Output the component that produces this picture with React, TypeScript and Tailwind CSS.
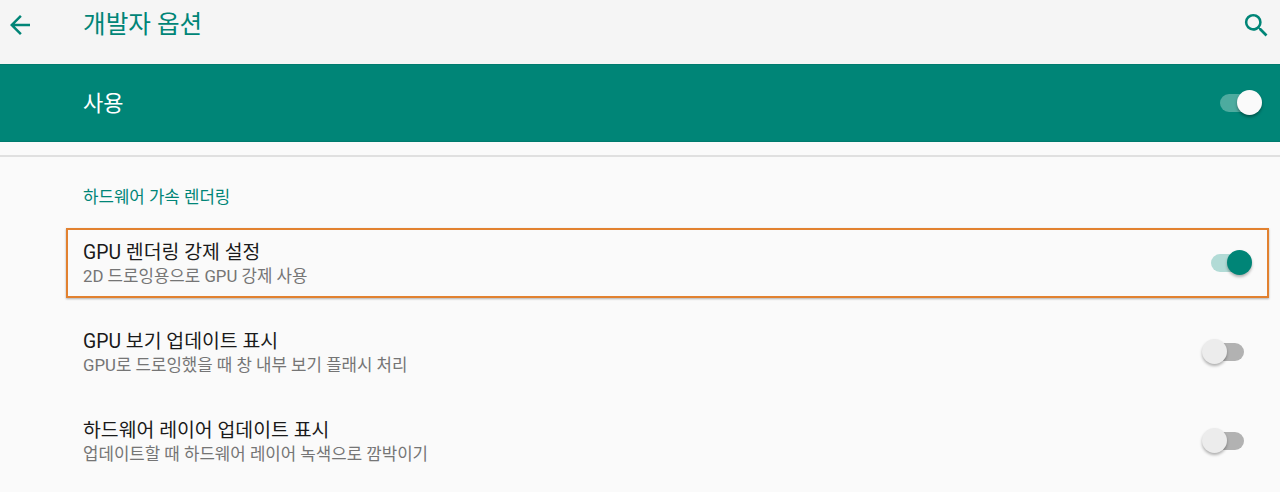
import React from "react";

const font = { fontFamily: '"Roboto","Noto Sans CJK KR",sans-serif' };

function Toggle({ on }: { on: boolean }) {
  return (
    <div className="relative h-[18px] w-[42px] shrink-0">
      <div className={on ? "absolute left-0 top-0 h-[18px] w-[34px] rounded-full bg-[#b2dbd6]" : "absolute left-[8px] top-0 h-[18px] w-[34px] rounded-full bg-[#b2b2b2]"} />
      <div className={on ? "absolute left-[16px] top-[-4px] h-[25px] w-[25px] rounded-full bg-[#008577] shadow-[0_2px_3px_rgba(0,0,0,0.3)]" : "absolute left-0 top-[-4px] h-[25px] w-[25px] rounded-full bg-[#ececec] shadow-[0_2px_3px_rgba(0,0,0,0.3)]"} />
    </div>
  );
}

function Row({ title, sub, on }: { title: string; sub: string; on: boolean }) {
  return (
    <div className={on ? "flex h-[89px] items-center justify-between pl-[83px] pr-[27px]" : "flex h-[89px] items-center justify-between pl-[83px] pr-[36px]"}>
      <div className="flex flex-col pt-[2px]">
        <div className="text-[19.4px] leading-[26px] text-[#1a1a1a]">{title}</div>
        <div className="text-[16.8px] leading-[21px] text-[#757575]">{sub}</div>
      </div>
      <Toggle on={on} />
    </div>
  );
}

export default function App() {
  return (
    <div className="flex h-[492px] w-[1280px] flex-col overflow-hidden bg-[#fafafa]" style={font}>
      <header className="flex h-[64px] items-center justify-between bg-[#f5f5f5] pl-[5px] pr-[8px]">
        <div className="flex items-center">
          <svg width="30" height="30" viewBox="0 0 24 24" className="mt-[-14px] text-[#008577]" fill="currentColor">
            <path d="M20 11H7.83l5.59-5.59L12 4l-8 8 8 8 1.41-1.41L7.83 13H20v-2z" />
          </svg>
          <h1 className="ml-[48px] mt-[-14px] text-[24.6px] leading-[30px] text-[#008577]">개발자 옵션</h1>
        </div>
        <svg width="31" height="31" viewBox="0 0 24 24" className="mt-[-14px] text-[#008577]" fill="currentColor">
          <path d="M15.5 14h-.79l-.28-.27A6.47 6.47 0 0 0 16 9.5 6.5 6.5 0 1 0 9.5 16c1.61 0 3.09-.59 4.23-1.57l.27.28v.79l5 4.99L20.49 19l-4.99-5zm-6 0C7.01 14 5 11.99 5 9.5S7.01 5 9.5 5 14 7.01 14 9.5 11.99 14 9.5 14z" />
        </svg>
      </header>

      <section className="flex h-[78px] items-center justify-between border-y border-[#007b6e] bg-[#008577] pl-[83px] pr-[18px]">
        <span className="text-[22px] text-white">사용</span>
        <div className="relative h-[18px] w-[42px]">
          <div className="absolute left-0 top-0 h-[18px] w-[34px] rounded-full bg-[#4dab9f]" />
          <div className="absolute left-[17px] top-[-4px] h-[25px] w-[25px] rounded-full bg-[#fafafa] shadow-[0_2px_3px_rgba(0,0,0,0.35)]" />
        </div>
      </section>

      <div className="mt-[13px] h-[2px] bg-[#e0e0e0]" />

      <div className="h-[61px] pl-[83px] pt-[29px] text-[16.8px] leading-[22px] text-[#008577]">하드웨어 가속 렌더링</div>

      <div className="relative">
        <div className="pointer-events-none absolute left-[66px] top-[10px] h-[70px] w-[1203px] border-2 border-[#e2812f] shadow-[0_1px_2px_rgba(0,0,0,0.3)]" />
        <Row title="GPU 렌더링 강제 설정" sub="2D 드로잉용으로 GPU 강제 사용" on />
      </div>
      <Row title="GPU 보기 업데이트 표시" sub="GPU로 드로잉했을 때 창 내부 보기 플래시 처리" on={false} />
      <Row title="하드웨어 레이어 업데이트 표시" sub="업데이트할 때 하드웨어 레이어 녹색으로 깜박이기" on={false} />
    </div>
  );
}
